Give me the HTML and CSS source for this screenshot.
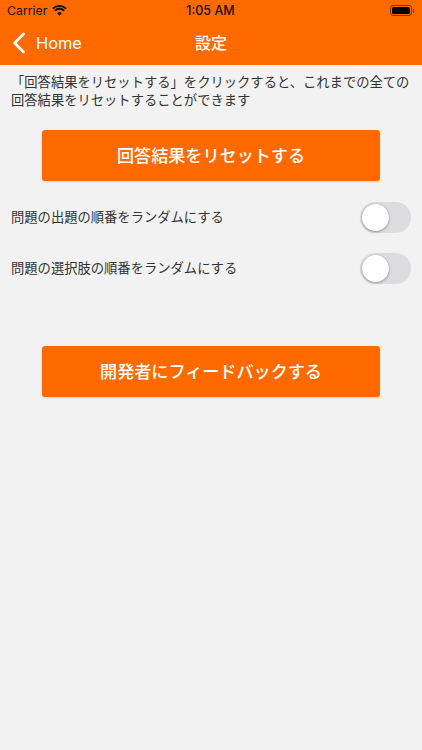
FILE: index.html
```html
<!DOCTYPE html>
<html lang="ja">
<head>
<meta charset="utf-8">
<title>設定</title>
<link rel="stylesheet" href="styles.css">
</head>
<body>
<header class="top">
  <div class="status">
    <div class="status-left">
      <span>Carrier</span>
      <svg class="wifi" viewBox="0 0 16 12" width="15" height="11"><path d="M8 11.6 5.5 8.9a3.6 3.6 0 0 1 5 0Z" fill="#141414"/><path d="M3.6 7 2.1 5.4a8.6 8.6 0 0 1 11.8 0L12.4 7a6.4 6.4 0 0 0-8.8 0Z" fill="#141414"/><path d="M1.4 4.7 0 3.2a11.8 11.8 0 0 1 16 0l-1.4 1.5a9.7 9.7 0 0 0-13.2 0Z" fill="#141414"/></svg>
    </div>
    <span class="time">1:05 AM</span>
    <div class="battery"><span class="battery-body"><span class="battery-fill"></span></span><span class="battery-tip"></span></div>
  </div>
  <nav class="nav">
    <a class="back">
      <svg viewBox="0 0 14 22" width="14" height="22"><path d="M11.5 2 2.6 11l8.9 9" fill="none" stroke="#fff" stroke-width="2.8" stroke-linecap="round" stroke-linejoin="round"/></svg>
      <span>Home</span>
    </a>
    <h1 class="title">設定</h1>
  </nav>
</header>
<main class="content">
  <p class="note">「回答結果をリセットする」をクリックすると、これまでの全ての回答結果をリセットすることができます</p>
  <button class="action reset">回答結果をリセットする</button>
  <div class="row first">
    <span class="label">問題の出題の順番をランダムにする</span>
    <span class="switch"><span class="knob"></span></span>
  </div>
  <div class="row">
    <span class="label">問題の選択肢の順番をランダムにする</span>
    <span class="switch"><span class="knob"></span></span>
  </div>
  <button class="action feedback">開発者にフィードバックする</button>
</main>
</body>
</html>
```
FILE: styles.css
```css
* { box-sizing: border-box; }
html, body { margin: 0; height: 100%; }
body {
  width: 422px;
  height: 750px;
  overflow: hidden;
  background: #f2f2f2;
  color: #333;
  font-family: "Inter", "Liberation Sans", "Noto Sans CJK JP", sans-serif;
}
.top { height: 65px; background: #ff6a00; display: flex; flex-direction: column; }
.status {
  height: 21px;
  padding: 0 8px 0 7px;
  display: grid;
  grid-template-columns: 1fr auto 1fr;
  align-items: center;
  font-size: 13px;
  color: #1a1008;
}
.status-left { display: flex; align-items: center; gap: 5px; font-family: "Inter", "Liberation Sans", sans-serif; font-size: 12.3px; }
.wifi { margin-top: -1px; }
.time { font-family: "Inter", "Liberation Sans", sans-serif; font-weight: 500; font-size: 12.5px; }
.battery { display: flex; align-items: center; justify-content: flex-end; gap: 1px; }
.battery-body { width: 22px; height: 11px; border: 1px solid #7a3a08; border-radius: 3px; padding: 1px; display: block; }
.battery-fill { display: block; height: 100%; background: #000; border-radius: 1.5px; }
.battery-tip { width: 1px; height: 4px; background: #7a3a08; }
.nav { flex: 1; position: relative; display: flex; align-items: center; justify-content: center; color: #fff; padding-bottom: 2px; }
.back { position: absolute; left: 12px; top: 11px; display: flex; align-items: center; gap: 10px; font-size: 16.4px; font-family: "Inter", "Liberation Sans", sans-serif; }
.title { margin: 0; font-size: 16px; font-weight: 500; font-family: "Noto Sans CJK JP", sans-serif; }
.content { padding: 8px 11px 0; }
.note { margin: 0; font-size: 13.3px; line-height: 18px; font-family: "Noto Sans CJK JP", sans-serif; }
.action {
  display: block;
  width: 338px;
  height: 51px;
  margin: 0 auto;
  padding: 0 0 2px;
  border: 0;
  border-radius: 3px;
  background: #ff6a00;
  color: #fff;
  font-size: 17.1px;
  font-weight: 500;
  font-family: "Noto Sans CJK JP", sans-serif;
  box-shadow: 0 1px 2px rgba(0,0,0,.15);
}
.reset { margin-top: 21px; }
.feedback { margin-top: 62px; }
.row {
  display: flex;
  justify-content: space-between;
  align-items: center;
  height: 31px;
  margin-top: 20px;
  font-size: 13.3px;
  font-family: "Noto Sans CJK JP", sans-serif;
}
.row.first { margin-top: 21px; }
.label { padding-bottom: 3px; }
.switch { width: 51px; height: 31px; border-radius: 16px; background: #dcdcde; display: block; padding: 2px; }
.knob { display: block; width: 27px; height: 27px; border-radius: 50%; background: #fff; box-shadow: 0 1px 3px rgba(0,0,0,.3), 0 0 0 .5px rgba(0,0,0,.08); }
```
